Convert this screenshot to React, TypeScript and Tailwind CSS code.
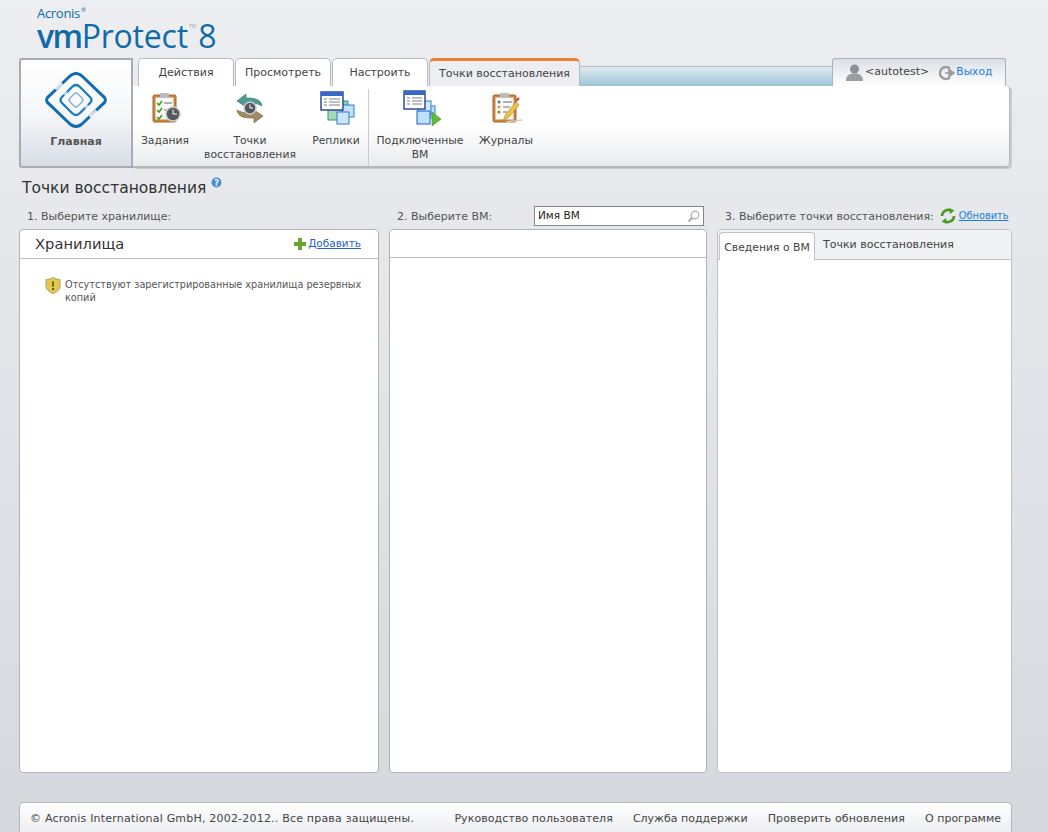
const font = "font-['DejaVu_Sans',Verdana,sans-serif]";

function HomeLogo() {
  return (
    <svg width="66" height="56" viewBox="0 0 66 56" fill="none">
      <path d="M27 4 Q33 -1 39 4 L60 24 Q65 28 60 32 L39 52 Q33 57 27 52 L6 32 Q1 28 6 24 Z" stroke="#0f6cb0" strokeWidth="3" />
      <path d="M29 15 Q33 11 37 15 L47 25 Q50 28 47 31 L37 41 Q33 45 29 41 L19 31 Q16 28 19 25 Z" stroke="#1a7abb" strokeWidth="2.2" />
      <path d="M31 22 Q33 20 35 22 L39 26 Q41 28 39 30 L35 34 Q33 36 31 34 L27 30 Q25 28 27 26 Z" stroke="#7fb0d6" strokeWidth="1.4" />
      <path d="M19 11 L12 17 M47 45 L54 39" stroke="#f4f6f8" strokeWidth="4" opacity=".85" />
      <path d="M24 20 L21 23 M42 36 L45 33" stroke="#f4f6f8" strokeWidth="3" opacity=".7" />
    </svg>
  );
}

function ClockBadge({ x, y, r = 7 }: { x: number; y: number; r?: number }) {
  return (
    <g>
      <circle cx={x} cy={y} r={r} fill="#55585c" stroke="#c9ccd0" strokeWidth="1.6" />
      <path d={`M${x} ${y - r + 2.5} V${y} H${x + r - 3}`} stroke="#fff" strokeWidth="1" fill="none" />
    </g>
  );
}

function TasksIcon() {
  return (
    <svg className="ml-[4px]" width="30" height="32" viewBox="0 0 30 32" fill="none">
      <rect x="1" y="3" width="23" height="27" rx="1.5" fill="#c9853f" stroke="#a8652a" />
      <rect x="3.5" y="5.5" width="18" height="22" fill="#fbfbf8" />
      <rect x="8" y="1" width="9" height="5" rx="1" fill="#b9bdc1" />
      <path d="M5 11 l2 2 l3 -4 M5 18 l2 2 l3 -4 M5 25 l2 2 l3 -4" stroke="#3f9a2b" strokeWidth="1.5" />
      <path d="M12 11 H20 M12 18 H16" stroke="#676b70" strokeWidth="1" />
      <ClockBadge x={21} y={22} />
    </svg>
  );
}

function RestoreIcon() {
  return (
    <svg width="28" height="32" viewBox="0 0 28 32" fill="none">
      <path d="M26 14 C25 7 18 6 10 6 V2 L1 9 L10 15 V11 C16 11 21 11 26 14 Z" fill="#4f9b93" stroke="#3b7d77" strokeWidth=".7" />
      <path d="M1 18 C2 26 10 26 18 26 V31 L27 24 L18 18 V21 C12 21 6 21 1 18 Z" fill="#a08a5f" stroke="#7e6c49" strokeWidth=".7" />
      <ClockBadge x={14} y={16} r={6} />
    </svg>
  );
}

function ReplicaIcon() {
  return (
    <svg className="ml-[4px]" width="36" height="34" viewBox="0 0 36 34" fill="none">
      <rect x="15" y="10" width="13" height="15" fill="#8fd0a0" stroke="#3b9a68" />
      <rect x="8" y="14" width="14" height="15" fill="#a7d8b5" stroke="#3b9a68" />
      <rect x="22" y="14" width="12" height="12" fill="#bfe0fa" stroke="#2b7fd0" />
      <rect x="17" y="21" width="12" height="12" fill="#cbe5fa" stroke="#2b7fd0" />
      <rect x="1" y="1" width="22" height="18" fill="#fff" stroke="#233f9a" strokeWidth="1.4" />
      <rect x="1" y="1" width="22" height="4" fill="#3768c8" />
      <path d="M4 8 H7 M9 8 H20 M4 11 H7 M9 11 H20 M4 14 H7 M9 14 H20" stroke="#7b8088" />
    </svg>
  );
}

function MountedIcon() {
  return (
    <svg className="ml-[4px]" width="38" height="36" viewBox="0 0 38 36" fill="none">
      <rect x="21" y="16" width="11" height="12" fill="#bfe0fa" stroke="#2b7fd0" />
      <rect x="15" y="11" width="13" height="14" fill="#d5ebfb" stroke="#2b7fd0" />
      <rect x="14" y="21" width="13" height="13" fill="#bfe0fa" stroke="#1f5fc0" />
      <rect x="1" y="1" width="21" height="18" fill="#fff" stroke="#233f9a" strokeWidth="1.4" />
      <rect x="1" y="1" width="21" height="4" fill="#3768c8" />
      <path d="M4 8 H7 M9 8 H19 M4 11 H7 M9 11 H19 M4 14 H7 M9 14 H19" stroke="#7b8088" />
      <path d="M29 22 L38 29 L29 36 Z" fill="#63bb3b" stroke="#3f8f28" strokeWidth=".6" />
    </svg>
  );
}

function JournalIcon() {
  return (
    <svg className="ml-[4px]" width="32" height="32" viewBox="0 0 32 32" fill="none">
      <rect x="1" y="3" width="23" height="27" rx="1.5" fill="#c9853f" stroke="#a8652a" />
      <rect x="3.5" y="5.5" width="18" height="22" fill="#fbfbf8" />
      <rect x="8" y="1" width="9" height="5" rx="1" fill="#b9bdc1" />
      <circle cx="7" cy="10" r="1.5" fill="#6468a8" />
      <circle cx="7" cy="15" r="1.5" fill="#d4a030" />
      <circle cx="7" cy="20" r="1.5" fill="#c8602c" />
      <path d="M11 10 H20 M11 15 H18 M11 20 H15" stroke="#676b70" />
      <path d="M11 29 L14 22 L24 10 L27 13 L17 25 Z" fill="#eec14a" stroke="#b08a2a" strokeWidth=".7" />
      <path d="M24 9 L27 6" stroke="#d14a4a" strokeWidth="2.4" />
      <path d="M14 30 L30 28" stroke="#c9ccd0" strokeWidth="1.5" />
    </svg>
  );
}

function RibbonItem({ width, className, icon, label }: { width: string; className?: string; icon: React.ReactNode; label: React.ReactNode }) {
  return (
    <div className={`${width} ${className ?? ""} flex flex-col items-center`}>
      <div className="flex h-[38px] items-center justify-center">{icon}</div>
      <div className="mt-[7px] text-center text-[10.8px] leading-[14px] text-[#444]">{label}</div>
    </div>
  );
}

function Tab({ children, className }: { children: React.ReactNode; className: string }) {
  return (
    <div className={`flex items-center justify-center rounded-t-[5px] border border-b-0 border-[#b4bcc6] pt-[2px] text-[11px] text-[#444] ${className}`}>
      {children}
    </div>
  );
}

function PanelLabel({ children, className }: { children: React.ReactNode; className?: string }) {
  return <div className={`whitespace-nowrap text-[11px] leading-[14px] text-[#555] ${className ?? ""}`}>{children}</div>;
}

export default function App() {
  return (
    <div className={`${font} relative flex h-[832px] w-[1048px] flex-col overflow-hidden bg-gradient-to-b from-[#eceef1] to-[#d5d8dd]`}>
      {/* Logo */}
      <div className="h-[58px] shrink-0 pl-[37px] pt-[5px] font-['Open_Sans',sans-serif] text-[#0f6aa8]">
        <div className="flex h-[16px] text-[13px] leading-[16px] tracking-[-0.3px]">
          <span>Acronis</span>
          <span className="ml-px text-[6px] leading-[10px]">®</span>
        </div>
        <div className="flex h-[30px] text-[32px] leading-[30px]">
          <span className="font-semibold tracking-[-1.5px]">vm</span>
          <span className="tracking-[-0.2px]">Protect</span>
          <span className="ml-[1px] text-[5px] leading-[10px] text-[#9ab]">TM</span>
          <span className="ml-[2px]">8</span>
        </div>
      </div>

      {/* Toolbar */}
      <div className="flex h-[110px] shrink-0 pl-[19px]">
        <div className="flex w-[114px] flex-col items-center rounded-l-[3px] border-2 border-[#a7acb2] bg-gradient-to-b from-white via-[#f6f7f9] to-[#d8dde6] pt-[12px]">
          <HomeLogo />
          <div className="mt-[6px] text-[11px] font-bold text-[#555]">Главная</div>
        </div>
        <div className="flex w-[877px] flex-col">
          <div className="flex h-[28px] w-[873px] items-end">
            <div className="flex flex-1 items-end self-end pl-[5px]">
              <Tab className="h-[28px] w-[96px] bg-white">Действия</Tab>
              <Tab className="ml-[1px] h-[28px] w-[96px] bg-white">Просмотреть</Tab>
              <Tab className="ml-[1px] h-[28px] w-[96px] bg-white">Настроить</Tab>
              <Tab className="ml-[1px] h-[28px] w-[151px] border-t-[3px] border-t-[#f08030] bg-[#eceef1]">Точки восстановления</Tab>
              <div className="h-[20px] flex-1 border-t border-[#b4bcc6] bg-gradient-to-b from-[#dfeaef] to-[#9cc4d6]" />
            </div>
            <div className="flex h-[28px] w-[174px] items-center rounded-t-[3px] border border-b-0 border-[#a9b2bd] bg-gradient-to-b from-[#dcdfe6] to-white pl-[13px] text-[11px]">
              <svg width="17" height="17" viewBox="0 0 17 17">
                <circle cx="8.5" cy="5" r="4.5" fill="#8d9094" />
                <path d="M0 17 C0 11 4 9.5 8.5 9.5 C13 9.5 17 11 17 17 Z" fill="#9a9da1" />
              </svg>
              <span className="ml-[2px] text-[#444]">&lt;autotest&gt;</span>
              <svg className="ml-[10px]" width="16" height="16" viewBox="0 0 16 16" fill="none">
                <path d="M11 3.6 A6 6 0 1 0 11 12.4" stroke="#9a9da0" strokeWidth="2.4" />
                <path d="M6 8 H12 M10 4.5 L15 8 L10 11.5 Z" stroke="#9a9da0" strokeWidth="1.6" fill="#9a9da0" />
              </svg>
              <span className="ml-[1px] text-[10.7px] text-[#1a7fe0]">Выход</span>
            </div>
          </div>
          <div className="flex h-[82px] w-[877px] rounded-r-[4px] border-b-2 border-r border-[#b5b7ba] bg-gradient-to-b from-white via-white to-[#e9ebee] pt-[3px] shadow-[2px_1px_0_#c9cbce]">
            <RibbonItem width="w-[64px]" icon={<TasksIcon />} label="Задания" />
            <RibbonItem width="w-[92px]" className="ml-[7px]" icon={<RestoreIcon />} label={<>Точки<br />восстановления</>} />
            <RibbonItem width="w-[56px]" className="ml-[12px]" icon={<ReplicaIcon />} label="Реплики" />
            <div className="ml-[4px] w-px self-stretch bg-[#c8cbcf]" />
            <RibbonItem width="w-[92px]" className="ml-[5px]" icon={<MountedIcon />} label={<>Подключенные<br />ВМ</>} />
            <RibbonItem width="w-[60px]" className="ml-[10px]" icon={<JournalIcon />} label="Журналы" />
          </div>
        </div>
      </div>

      {/* Title */}
      <div className="flex h-[33px] shrink-0 items-start pl-[22px] pt-[9px]">
        <span className="mt-px text-[15.5px] leading-[20px] text-[#333]">Точки восстановления</span>
        <svg className="ml-[5px]" width="11" height="11" viewBox="0 0 11 11">
          <circle cx="5.5" cy="5.5" r="5" fill="#4a8fd8" />
          <text x="5.5" y="8.5" textAnchor="middle" fontSize="8" fontWeight="bold" fill="#fff">?</text>
        </svg>
      </div>

      {/* Three columns */}
      <div className="flex shrink-0 gap-[10px] pl-[19px]">
        <div className="flex w-[360px] flex-col">
          <div className="flex h-[28px] items-center pl-[8px] pt-[2px]">
            <PanelLabel className="mt-px">1. Выберите хранилище:</PanelLabel>
          </div>
          <div className="h-[544px] rounded-[4px] border border-[#b0b2b5] bg-white">
            <div className="flex h-[29px] items-center justify-between border-b border-[#bcbec1] pl-[15px] pr-[17px]">
              <span className="text-[14.7px] text-[#333]">Хранилища</span>
              <div className="flex items-center">
                <svg width="14" height="14" viewBox="0 0 14 14">
                  <path d="M5 1 H9 V5 H13 V9 H9 V13 H5 V9 H1 V5 H5 Z" fill="#67a52c" />
                </svg>
                <span className="ml-[1px] text-[10.5px] text-[#2a5fc8] underline">Добавить</span>
              </div>
            </div>
            <div className="flex pl-[25px] pr-[14px] pt-[18px]">
              <svg className="shrink-0" width="16" height="17" viewBox="0 0 16 17">
                <path d="M8 0.5 C10 2 13 2.5 15 2.5 V9 C15 13 11 15.5 8 16.5 C5 15.5 1 13 1 9 V2.5 C3 2.5 6 2 8 0.5 Z" fill="#e3c94a" stroke="#a8a070" />
                <path d="M7 4.5 H9 L8.6 10 H7.4 Z M7 11 H9 V13 H7 Z" fill="#5a5320" />
              </svg>
              <p className="ml-[4px] mt-px text-[9.7px] leading-[13px] text-[#555]">
                Отсутствуют зарегистрированные хранилища резервных копий
              </p>
            </div>
          </div>
        </div>

        <div className="flex w-[318px] flex-col">
          <div className="flex h-[28px] items-center pl-[8px] pr-[3px] pt-[2px]">
            <PanelLabel className="mt-px">2. Выберите ВМ:</PanelLabel>
            <div className="ml-auto flex h-[20px] w-[170px] items-center justify-between border border-[#80858c] bg-white pl-[3px] pr-[3px]">
              <span className="text-[10.5px] text-[#222]">Имя ВМ</span>
              <svg width="13" height="13" viewBox="0 0 13 13" fill="none">
                <circle cx="8" cy="5" r="3.8" stroke="#a8abae" strokeWidth="1.2" />
                <path d="M5.5 7.5 L1.5 11.5" stroke="#a8abae" strokeWidth="2" />
              </svg>
            </div>
          </div>
          <div className="h-[544px] rounded-[4px] border border-[#b0b2b5] bg-white">
            <div className="h-[28px] border-b border-[#bcbec1]" />
          </div>
        </div>

        <div className="flex w-[295px] flex-col">
          <div className="flex h-[28px] items-center pl-[8px] pt-[2px]">
            <PanelLabel className="mt-px">3. Выберите точки восстановления:</PanelLabel>
            <svg className="ml-[6px] shrink-0" width="16" height="16" viewBox="0 0 16 16" fill="none">
              <path d="M2 8 A6 6 0 0 1 11 2.8 M14 8 A6 6 0 0 1 5 13.2" stroke="#4f9a24" strokeWidth="2.6" />
              <path d="M9.5 0 L14.5 2.5 L10 6 Z M6.5 16 L1.5 13.5 L6 10 Z" fill="#4f9a24" />
            </svg>
            <span className="ml-[3px] whitespace-nowrap text-[9.8px] text-[#1a7fe0] underline">Обновить</span>
          </div>
          <div className="h-[544px] rounded-[4px] border border-[#c0c2c5] bg-white">
            <div className="flex h-[30px] items-end rounded-t-[4px] border-b border-[#c0c2c5] bg-[#f0f1f2] pl-[1px]">
              <div className="-mb-px flex h-[28px] w-[96px] items-center justify-center rounded-t-[4px] border border-b-0 border-[#c0c2c5] bg-white pt-[4px] text-[10.8px] text-[#444]">
                Сведения о ВМ
              </div>
              <div className="ml-[8px] flex h-[28px] items-center pt-px text-[11px] text-[#444]">Точки восстановления</div>
            </div>
          </div>
        </div>
      </div>

      {/* Footer */}
      <div className="ml-[19px] mt-[29px] flex h-[40px] w-[993px] shrink-0 items-start rounded-t-[4px] border border-[#b4b6b9] bg-gradient-to-b from-white to-[#e6e8ec] pl-[10px] pr-[10px] pt-[8px] text-[11px] text-[#444]">
        <span className="tracking-[0.2px]">© Acronis International GmbH, 2002-2012.. Все права защищены.</span>
        <span className="ml-auto tracking-[0.08px]">Руководство пользователя</span>
        <span className="ml-[20px]">Служба поддержки</span>
        <span className="ml-[20px] tracking-[0.15px]">Проверить обновления</span>
        <span className="ml-[20px]">О программе</span>
      </div>
    </div>
  );
}
